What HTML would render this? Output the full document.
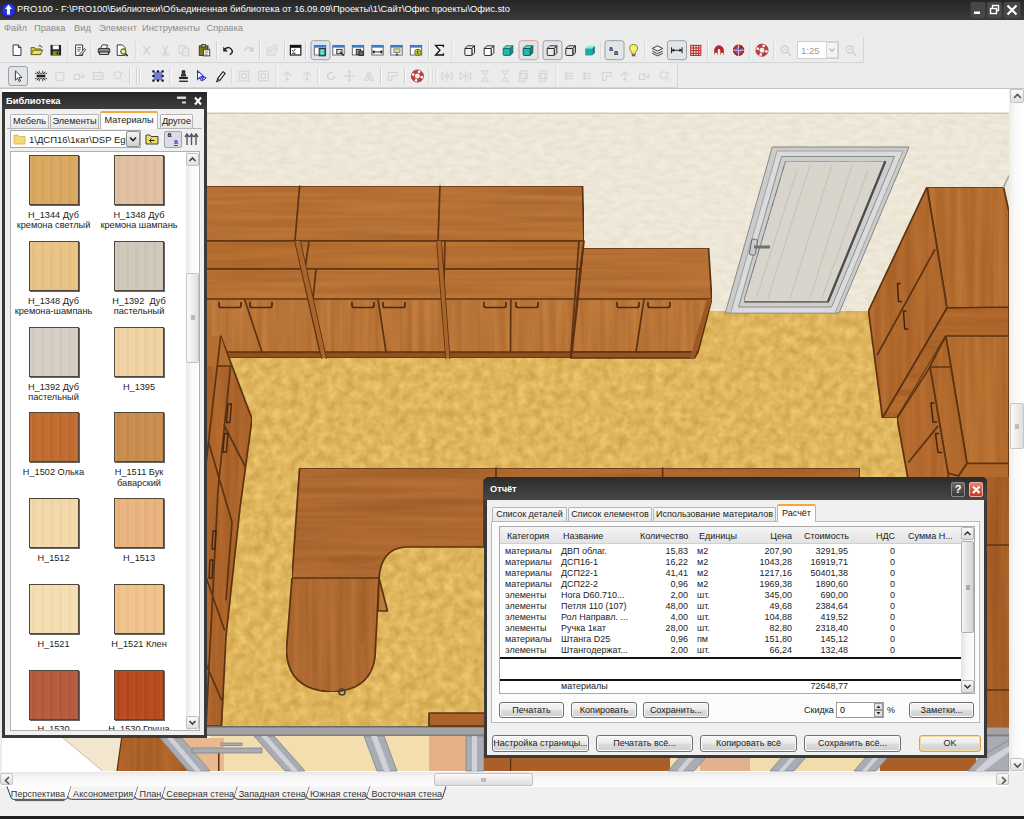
<!DOCTYPE html>
<html><head><meta charset="utf-8">
<style>
*{box-sizing:border-box;margin:0;padding:0}
html,body{width:1024px;height:819px;overflow:hidden;background:#fff}
body{position:relative;font-family:"Liberation Sans",sans-serif;font-size:11px;color:#000}
.abs{position:absolute}
#title{left:0;top:0;width:1024px;height:20px;background:linear-gradient(#262626,#3a3a3a);color:#fff;}
#title .t{position:absolute;left:17px;top:4px;font-size:9.3px;line-height:11px;white-space:nowrap}
#menu{left:0;top:20px;width:1024px;height:17px;background:#ebebeb;color:#8c8c8c;font-size:9.3px;line-height:11px}
#menu span{position:absolute;top:3px}
#tb{left:0;top:37px;width:1024px;height:52px;background:#ececec;border-bottom:1px solid #cbcbcb}
#scene{left:0;top:0}
/* library */
#lib{left:2px;top:92px;width:205px;height:646px;background:#3a3a3a;}
#lib .cap{position:absolute;left:0;top:0;width:205px;height:18px;background:linear-gradient(#262626,#3f3f3f);color:#fff;font-weight:bold;font-size:9.3px}
#lib .body{position:absolute;left:3px;top:17px;width:199px;height:626px;background:#f0f0f0}
.tab{position:absolute;height:14px;border:1px solid #b5b5b5;border-bottom:none;background:linear-gradient(#fafafa,#e6e6e6);font-size:10.5px;text-align:center;line-height:13px;color:#222;border-radius:2px 2px 0 0;white-space:nowrap}
.tab.on{background:#fcfcfc;border-top:2px solid #f0a93a;height:18px;line-height:14px}
.lbl{position:absolute;width:100px;text-align:center;font-size:9.2px;line-height:10.6px;color:#222;white-space:nowrap}
.th{position:absolute;width:50px;height:50px;border:1px solid #51473b;box-shadow:1px 1px 0 #666}
/* dialog */
#dlg{left:484px;top:477px;width:503px;height:281px;background:#3a3a3a;border-radius:5px 5px 0 0}
#dlg .cap{position:absolute;left:0;top:0;width:503px;height:23px;border-radius:5px 5px 0 0;background:linear-gradient(#2b2b2b,#474747);color:#fff;font-weight:bold;font-size:10.5px}
#dlg .body{position:absolute;left:3px;top:23px;width:497px;height:255px;background:#f0f0f0}
.btn{position:absolute;height:16px;border:1px solid #707070;border-radius:3px;background:linear-gradient(#f6f6f6 0%,#ececec 48%,#dcdcdc 52%,#d0d0d0 100%);font-size:10.5px;text-align:center;line-height:14px;color:#222;white-space:nowrap;box-shadow:inset 0 0 0 1px #fbfbfb}
.row{position:absolute;left:0;height:11px;font-size:10.5px;line-height:11px;color:#222;white-space:nowrap}
.row span{position:absolute;top:0}
.r{text-align:right}
</style></head><body>
<svg id="scene" class="abs" width="1024" height="819" viewBox="0 0 1024 819">
<defs>
<filter id="fw" color-interpolation-filters="sRGB" x="0" y="0" width="100%" height="100%"><feTurbulence type="fractalNoise" baseFrequency="0.006 0.16" numOctaves="2" seed="4" result="n"/><feColorMatrix in="n" type="matrix" values="0 0 0 0 0.38  0 0 0 0 0.18  0 0 0 0 0.04  0.42 0 0 0 -0.12" result="a"/><feComposite in="a" in2="SourceGraphic" operator="in" result="b"/><feMerge><feMergeNode in="SourceGraphic"/><feMergeNode in="b"/></feMerge></filter>
<filter id="fwv" color-interpolation-filters="sRGB" x="0" y="0" width="100%" height="100%"><feTurbulence type="fractalNoise" baseFrequency="0.16 0.006" numOctaves="2" seed="7" result="n"/><feColorMatrix in="n" type="matrix" values="0 0 0 0 0.38  0 0 0 0 0.18  0 0 0 0 0.04  0.42 0 0 0 -0.12" result="a"/><feComposite in="a" in2="SourceGraphic" operator="in" result="b"/><feMerge><feMergeNode in="SourceGraphic"/><feMergeNode in="b"/></feMerge></filter>
<filter id="ff" color-interpolation-filters="sRGB" x="0" y="0" width="100%" height="100%"><feTurbulence type="fractalNoise" baseFrequency="0.11" numOctaves="3" seed="2" result="n"/><feColorMatrix in="n" type="matrix" values="0 0 0 0 0.78  0 0 0 0 0.59  0 0 0 0 0.24  1.15 0 0 0 -0.2" result="a"/><feComposite in="a" in2="SourceGraphic" operator="in" result="b"/><feMerge><feMergeNode in="SourceGraphic"/><feMergeNode in="b"/></feMerge></filter>
<filter id="fp" color-interpolation-filters="sRGB" x="0" y="0" width="100%" height="100%"><feTurbulence type="fractalNoise" baseFrequency="0.09 0.2" numOctaves="2" seed="5" result="n"/><feColorMatrix in="n" type="matrix" values="0 0 0 0 0.87  0 0 0 0 0.83  0 0 0 0 0.73  0.9 0 0 0 -0.28" result="a"/><feComposite in="a" in2="SourceGraphic" operator="in" result="b"/><feMerge><feMergeNode in="SourceGraphic"/><feMergeNode in="b"/></feMerge></filter>
</defs>
<rect x="0" y="89" width="1009" height="24" fill="#fff"/>
<!-- wallpaper -->
<rect x="0" y="113" width="1009" height="199" fill="#f1ebdd" filter="url(#fp)"/>
<rect x="0" y="112.500" width="1009" height="1.500" fill="#cdcab4"/>
<!-- floor -->
<rect x="0" y="311" width="1009" height="416" fill="#edc871" filter="url(#ff)"/>
<!-- under area -->
<rect x="0" y="736" width="1009" height="35" fill="#f3deb0"/>
<g id="under"></g>
<!-- gray bar -->
<rect x="200" y="726" width="809" height="10" fill="#a3a3a3"/>
<rect x="200" y="726" width="809" height="1.5" fill="#6b6b6b"/>
<rect x="200" y="734.5" width="809" height="1.5" fill="#7d7d7d"/>
<g stroke="#5c3413" stroke-width="1.700" stroke-linejoin="round" stroke-linecap="round">
<!-- back tall cabinets -->
<g filter="url(#fw)">
<polygon points="200,186 582.5,186 584,241 200,241" fill="#bd7638"/>
<polygon points="200,241 584,241 580,269 200,269" fill="#be7534"/>
<polygon points="200,269 580,269 577,299 200,299" fill="#c07838"/>
<polygon points="200,352 572,352 571,358 200,358" fill="#97531f"/>
</g>
<polygon points="200,299 577,299 572,352 200,352" fill="#c27c3c" filter="url(#fwv)"/>
<!-- low cabinet -->
<polygon points="583,248 708.5,248 711.8,299 578,299" fill="#bd7638" filter="url(#fw)"/>
<polygon points="578,299 711.8,299 698,352 572,352" fill="#c27c3c" filter="url(#fwv)"/>
<polygon points="572,352 698,352 694.5,358 571,358" fill="#97531f"/>
<polygon points="707,299 711.8,299 694.5,358 690,358" fill="#9c5a22" stroke="none"/>
<!-- dividers -->
<g fill="none">
<path d="M299.6,186 L295,241"/><path d="M440,186 L438,241"/>
<path d="M295,241 L320,352 L322,358 M300,241 L326,358 M309,241 L305,269 M316,269 L313,299" />
<path d="M437,241 L446,358 M441,241 L449.5,358 M445,241 L443.5,299"/>
<path d="M579,241 L570.5,358 M584,241 L577.5,299"/>
<path d="M244.5,299 L262,352 M378,299 L386,352 M510.8,299 L510.5,352 M644,299 L636,352"/>
</g>
<polygon points="295,241 300,241 326,358 322,358" fill="#ab652a" stroke="none"/>
<polygon points="437,241 441,241 449.5,358 446,358" fill="#ab652a" stroke="none"/>
<!-- handles -->
<g fill="none" stroke="#4a2a18" stroke-width="1.700">
<path d="M219,302.500 v3 q0,2 2,2 h18 q2,0 2,-2 v-3"/><path d="M250,302.500 v3 q0,2 2,2 h18 q2,0 2,-2 v-3"/>
<path d="M352,302.500 v3 q0,2 2,2 h18 q2,0 2,-2 v-3"/><path d="M383,302.500 v3 q0,2 2,2 h18 q2,0 2,-2 v-3"/>
<path d="M484,302.500 v3 q0,2 2,2 h18 q2,0 2,-2 v-3"/><path d="M516,302.500 v3 q0,2 2,2 h18 q2,0 2,-2 v-3"/>
<path d="M617,302.500 v3 q0,2 2,2 h18 q2,0 2,-2 v-3"/><path d="M648,302.500 v3 q0,2 2,2 h18 q2,0 2,-2 v-3"/>
</g>
<!-- door -->
<g stroke="#858585" stroke-width="1">
<polygon points="772.7,147 909,147 839,313 725.7,313" fill="#cbcbcb"/>
<polygon points="777.500,151 903,151 835,313 731,313" fill="#dbdbdb" stroke="#a2a2a2"/>
<polygon points="782,156.500 894.500,156.500 831.500,307 739,307" fill="#cecece" stroke="#8c8c8c"/>
<polygon points="786,161 886,161 828.7,301.6 744,301.6" fill="#d8d5d0" stroke="#6a6a6a" filter="url(#fp)"/>
<path d="M885,162 L828,301.500" stroke="#4c4c4c" stroke-width="2.200" fill="none"/>
<path d="M745,302 H828" stroke="#6a6a6a" stroke-width="1.600" fill="none"/>
<g stroke="#c4c0ba" stroke-width="1.200" opacity="0.8"><path d="M810,165 L768,298 M832,165 L790,298 M852,165 L810,298 M868,170 L822,298 M797,170 L757,296"/></g>
<rect x="750.500" y="239" width="6" height="16" rx="2" fill="#c9c9c9" stroke="#6a6a6a" transform="rotate(10 753 247)"/>
<rect x="754" y="245.500" width="16" height="3" fill="#707070" stroke="none"/>
</g>
<!-- right cabinet 1 -->
<polygon points="927,187 1003.5,187 1009,212 1009,307 947,308" fill="#bd7434" filter="url(#fwv)"/>
<polygon points="927,187 947,308 882.5,418 868.5,311" fill="#b86e30" filter="url(#fwv)"/>
<polygon points="947,308 1009,307 1009,336 945.8,336 897,418 882.5,418" fill="#b56c2e" filter="url(#fw)"/>
<path d="M934.6,250 L877.4,354.500" fill="none"/>
<g fill="none" stroke="#3e2414" stroke-width="1.500"><path d="M900,283.500 h-2.500 l1,18 h3"/><path d="M906,311 h-2.500 l1.200,18 h3"/></g>
<path d="M1003.500,187 L1009,176" stroke="#aaa" fill="none"/>
<!-- right cabinet 2 -->
<polygon points="897,418 945.8,336 1009,336 1009,490 910,490" fill="#b56c2e" stroke="none"/>
<polygon points="945.8,336 1009,336 1009,463.500 967,463.500" fill="#bd7434" filter="url(#fwv)"/>
<polygon points="945.8,336 967,463.500 958.600,476 948,473 929.600,367" fill="#b56c2e" filter="url(#fwv)"/>
<polygon points="897,418 930,367 948,473 950,490 910,490" fill="#b86e30" filter="url(#fwv)"/>
<polygon points="967,463.500 1009,463.500 1009,490 955,490 958.600,476" fill="#b36a2d"/>
<path d="M929.600,367 H950 M908.700,462 L937.700,426.400" fill="none"/>
<g fill="none" stroke="#3e2414" stroke-width="1.500"><path d="M934,403 h-3 l2,19 h3.500"/><path d="M938.500,433.500 h-3 l2.500,19 h3.500"/></g>
<!-- right of dialog -->
<rect x="985" y="477" width="24" height="250" fill="#ad6229" stroke="none" filter="url(#fwv)"/>
<path d="M987,545 H1009 M987,690 H1009" fill="none"/>
<!-- desk -->
<path d="M299.6,468 H860 V480 H484 V547 H405 Q381,549 379,578 L292,578 Z" fill="#b56e34" filter="url(#fw)"/>
<path d="M292,578 L379,578 L375,657 Q371,690 332,692 Q288,690 286.4,651 Z" fill="#b67035" filter="url(#fwv)"/>
<polygon points="379,578 387.5,611 378,611" fill="#c07838"/>
<ellipse cx="352" cy="560" rx="25" ry="4.500" fill="#9a5a26" opacity="0.35" stroke="none"/><ellipse cx="362" cy="618" rx="4" ry="26" fill="#9a5a26" opacity="0.3" stroke="none"/>
<path d="M496,468 V480 M662.6,468 V477" fill="none"/>
<circle cx="342" cy="692" r="3" fill="none" stroke="#444"/>
<!-- left cabinet -->
<polygon points="200,336 220.7,336 252,419 240,508 226,636 221.500,726 200,726" fill="#b46a2e" filter="url(#fwv)"/>
<polygon points="200,336 220.7,336 230.5,366 200,366" fill="#b56e30" stroke="none"/>
<path d="M220.7,336 L208.5,442 L200,520 M218,366 H230.5 M230.5,366 L218,490 L206,726 M224,425 L245,466 M208.5,442 L232,522 L226,600 M200,560 L224.500,630 M200,650 L221.500,700" fill="none"/>
<g fill="none" stroke="#3e2414" stroke-width="1.3"><path d="M228,404 h3.500 l-1.500,18.500 h-3.500 z"/><path d="M224.500,433.500 h3.500 l-1.500,18.500 h-3.500 z"/><path d="M213,531 h3 l-1,18 h-3 z"/><path d="M210,560 h3 l-1,18 h-3 z"/></g>
<!-- dresser bottom right -->
<rect x="429" y="713" width="56" height="13" fill="#ad6229"/>
</g>
<!-- under-bar details -->
<g>
<rect x="0" y="736" width="210" height="35" fill="#fff"/>
<polygon points="63,738 121.600,738 117,771 102.500,771" fill="#f2e6cf"/>
<path d="M63,738 L102.500,771" stroke="#c9bfa8" stroke-width="1"/>
<polygon points="121.600,738 160,738 190,771 117,771" fill="#b4682c" filter="url(#fwv)"/>
<path d="M121.600,738 L117,771" stroke="#55300f" stroke-width="1.200"/>
<polygon points="182,738 224,738 224,771 210,771" fill="#e8b88e"/>
<g fill="#a9acb3" stroke="#80838a" stroke-width="0.800">
<polygon points="160,738 182,738 210,771 188,771"/><polygon points="167,738 173,738 201,771 195,771" fill="#cfd2d8" stroke="none"/>
</g>
<rect x="218" y="752" width="1.500" height="19" fill="#55300f"/>
<rect x="429" y="736" width="41" height="35" fill="#e6b088"/>
<g fill="#a9acb3" stroke="#80838a" stroke-width="0.800">
<polygon points="254,736 274,736 305,771 285,771"/><polygon points="261,736 267,736 298,771 292,771" fill="#cfd2d8" stroke="none"/>
<polygon points="364,736 384,736 397,771 377,771"/><polygon points="371,736 377,736 390,771 384,771" fill="#cfd2d8" stroke="none"/>
<rect x="466" y="736" width="18" height="35"/><rect x="472" y="736" width="5" height="35" fill="#cfd2d8" stroke="none"/>
<rect x="192" y="748" width="70" height="5"/><rect x="221" y="743" width="21" height="2.500"/>
<polygon points="987,736 1009,736 1009,745 987,760"/>
</g>
<rect x="484" y="757" width="186" height="14" fill="#a95f27"/><rect x="510" y="757" width="1.200" height="14" fill="#55300f"/>
<rect x="700" y="757" width="50" height="14" fill="#e2b290"/>
<rect x="750" y="757" width="130" height="14" fill="#f1dcab"/>
<rect x="880" y="757" width="96" height="14" fill="#a95f27"/>
<g fill="#a9acb3" stroke="#80838a" stroke-width="0.800">
<polygon points="680,757 706,757 694,771 668,771"/><polygon points="689,757 695,757 683,771 677,771" fill="#cfd2d8" stroke="none"/>
<polygon points="782,757 806,757 794,771 770,771"/><polygon points="791,757 796,757 784,771 779,771" fill="#cfd2d8" stroke="none"/>
<polygon points="866,757 888,757 876,771 854,771"/><polygon points="874,757 879,757 867,771 862,771" fill="#cfd2d8" stroke="none"/>
<polygon points="980,757 1009,740 1009,771 968,771"/><polygon points="990,757 1009,746 1009,752 984,771 975,771" fill="#cfd2d8" stroke="none"/>
</g>
</g>
</svg>

<div id="title" class="abs"><svg style="position:absolute;left:1px;top:2px" width="15" height="16" viewBox="0 0 15 16"><circle cx="7.500" cy="8" r="6.800" fill="#2a34d8" stroke="#1a1a90"/><path d="M7.500,2.500 L11,7 H9 V12.500 H6 V7 H4 Z" fill="#fff"/></svg><svg style="position:absolute;left:968px;top:1px" width="56" height="18" viewBox="0 0 56 18"><rect x="2.500" y="1" width="15" height="16" rx="2" fill="#474747"/><rect x="19" y="1" width="15" height="16" rx="2" fill="#474747"/><rect x="35.500" y="1" width="17" height="16" rx="2" fill="#474747"/><rect x="6" y="10.500" width="6" height="2.500" fill="#fff"/><rect x="24.500" y="4.500" width="6" height="5" fill="none" stroke="#fff" stroke-width="1.400"/><rect x="22.500" y="7.500" width="6" height="5" fill="#474747" stroke="#fff" stroke-width="1.400"/><path d="M39.500,4.500 L48.500,13.500 M48.500,4.500 L39.500,13.500" stroke="#fff" stroke-width="2.200"/></svg><span class="t">PRO100 - F:\PRO100\Библиотеки\Объединенная библиотека от 16.09.09\Проекты\1\Сайт\Офис проекты\Офис.sto</span></div>
<div id="menu" class="abs"><span style="left:4px">Файл</span><span style="left:34px">Правка</span><span style="left:74px">Вид</span><span style="left:99px">Элемент</span><span style="left:142px">Инструменты</span><span style="left:206.500px">Справка</span></div>
<div id="tb" class="abs"></div>
<svg class="abs" style="left:0;top:37px" width="1024" height="52" viewBox="0 37 1024 52"><path d="M0,62.500 H863.500 V37.500" fill="none" stroke="#d4d4d4"/><path d="M0,87.500 H677.500 V63" fill="none" stroke="#d4d4d4"/><path d="M0,88.500 H1024" stroke="#c4c4c4"/><g transform="translate(10.0,43.2) scale(0.875)"><path d="M3.5,2 h6 l3,3 v9 h-9 z" fill="#fff" stroke="#222"/><path d="M9.5,2 v3 h3" fill="none" stroke="#222"/></g><g transform="translate(29.8,43.2) scale(0.875)"><path d="M1.5,5 h4 l1,1.5 h6 v6.5 h-11 z" fill="#d8c840" stroke="#5a5a10"/><path d="M1.5,13 l2.5,-5 h11 l-3,5 z" fill="#efe060" stroke="#5a5a10"/><path d="M10,3 q3,-1 4,2" stroke="#222" fill="none"/></g><g transform="translate(48.8,43.2) scale(0.875)"><rect x="2" y="2" width="12" height="12" fill="#222"/><rect x="4.5" y="2.5" width="7" height="4.5" fill="#fff"/><rect x="4.5" y="9" width="7" height="5" fill="#8a8a1a"/><rect x="9" y="10" width="1.5" height="3" fill="#222"/></g><path d="M68,41.2 V59.2" stroke="#d0d0d0" stroke-width="1"/><path d="M69,41.2 V59.2" stroke="#fafafa" stroke-width="1"/><g transform="translate(73.0,43.2) scale(0.875)"><path d="M3,2 h8 v12 h-8 z" fill="#fff" stroke="#222"/><path d="M5,5 h4 M5,7 h4 M5,9 h3" stroke="#555"/><path d="M8,12 l5,-6 l1.5,1.5 l-5,6 l-2,0.5 z" fill="#ddd" stroke="#222" stroke-width="0.8"/></g><path d="M91,41.2 V59.2" stroke="#d0d0d0" stroke-width="1"/><path d="M92,41.2 V59.2" stroke="#fafafa" stroke-width="1"/><g transform="translate(97.0,43.2) scale(0.875)"><path d="M4,6 l2,-4 h6 l-1,4" fill="#fff" stroke="#222"/><path d="M1.5,7 q0,-1 1,-1 h11 q1,0 1,1 v4 h-13 z" fill="#888" stroke="#222"/><rect x="3" y="10" width="10" height="3" fill="#ccc" stroke="#222"/></g><g transform="translate(115.0,43.2) scale(0.875)"><path d="M2.5,2 h6 l3,3 v9 h-9 z" fill="#fff" stroke="#222"/><circle cx="9.5" cy="9.5" r="3" fill="#e8e8a0" stroke="#6a6a10" stroke-width="1.2"/><path d="M11.7,11.7 L14.5,14.5" stroke="#222" stroke-width="1.6"/></g><path d="M136,41.2 V59.2" stroke="#d0d0d0" stroke-width="1"/><path d="M137,41.2 V59.2" stroke="#fafafa" stroke-width="1"/><g transform="translate(139.7,43.2) scale(0.875)"><path d="M4,3 L12,13 M12,3 L4,13" stroke="#cecece" stroke-width="1.3"/></g><g transform="translate(158.7,43.2) scale(0.875)"><path d="M5,3 L9,12 M10,3 L6,12" stroke="#cecece" stroke-width="1.2"/><circle cx="5.5" cy="13" r="1.5" fill="none" stroke="#cecece"/><circle cx="10" cy="13" r="1.5" fill="none" stroke="#cecece"/></g><g transform="translate(177.0,43.2) scale(0.875)"><rect x="2.5" y="2.5" width="7" height="9" fill="none" stroke="#cecece"/><rect x="6.5" y="5.5" width="7" height="9" fill="#e8e8e8" stroke="#cecece"/></g><g transform="translate(197.5,43.2) scale(0.875)"><rect x="2" y="3" width="10" height="11" fill="#7a7a18" stroke="#333"/><rect x="5" y="1.5" width="4" height="3" fill="#bbb" stroke="#333"/><rect x="7" y="7" width="7" height="7.5" fill="#fff" stroke="#333"/><path d="M8.5,9 h4 M8.5,11 h4 M8.5,13 h3" stroke="#666" stroke-width="0.8"/></g><path d="M216.6,41.2 V59.2" stroke="#d0d0d0" stroke-width="1"/><path d="M217.6,41.2 V59.2" stroke="#fafafa" stroke-width="1"/><g transform="translate(221.0,43.2) scale(0.875)"><path d="M4,7 q6,-5 9,2 q0,3 -3,4" fill="none" stroke="#222" stroke-width="1.6"/><path d="M2.5,4 v5.5 h5.5 z" fill="#222"/></g><g transform="translate(241.7,43.2) scale(0.875)"><path d="M12,7 q-6,-5 -9,2" fill="none" stroke="#cecece" stroke-width="1.5"/><path d="M13.5,4 v5.5 h-5.5 z" fill="#cecece"/></g><path d="M259.5,41.2 V59.2" stroke="#d0d0d0" stroke-width="1"/><path d="M260.5,41.2 V59.2" stroke="#fafafa" stroke-width="1"/><g transform="translate(265.0,43.2) scale(0.875)"><rect x="2.5" y="5.5" width="9" height="8" fill="none" stroke="#cecece"/><path d="M9,2.5 h5 v7" fill="none" stroke="#cecece"/><path d="M4,8 h5 M4,10 h5" stroke="#cecece"/></g><path d="M284.6,41.2 V59.2" stroke="#d0d0d0" stroke-width="1"/><path d="M285.6,41.2 V59.2" stroke="#fafafa" stroke-width="1"/><g transform="translate(288.6,43.2) scale(0.875)"><rect x="2" y="2.5" width="12" height="11" fill="#fff" stroke="#111" stroke-width="1.3"/><rect x="2" y="2.5" width="12" height="2.8" fill="#111"/><path d="M4,8 l1.5,1.5 l2.5,-3" stroke="#111" fill="none"/><path d="M4,11.5 h4" stroke="#111"/></g><path d="M305.5,41.2 V59.2" stroke="#d0d0d0" stroke-width="1"/><path d="M306.5,41.2 V59.2" stroke="#fafafa" stroke-width="1"/><rect x="311" y="40.7" width="19" height="19" rx="2.5" fill="#e2e5e8" stroke="#9aa0a8" stroke-width="1"/><g transform="translate(313.0,43.2) scale(0.875)"><rect x="1.5" y="2.5" width="13" height="11" fill="#fff" stroke="#556"/><rect x="1.5" y="2.5" width="13" height="2.6" fill="#3a7ad0"/><rect x="7" y="6" width="7" height="8.5" fill="#1aa7a0" stroke="#222"/><path d="M8.5,8 h4 M8.5,10 h4 M8.5,12 h4" stroke="#fff" stroke-width="0.9"/></g><g transform="translate(331.5,43.2) scale(0.875)"><rect x="1.5" y="2.5" width="13" height="11" fill="#fff" stroke="#556"/><rect x="1.5" y="2.5" width="13" height="2.6" fill="#3a7ad0"/><rect x="6" y="7" width="6" height="5" fill="#ddd" stroke="#222"/><path d="M10,10 l4,4" stroke="#222" stroke-width="1.4"/></g><g transform="translate(351.0,43.2) scale(0.875)"><rect x="1.5" y="2.5" width="13" height="11" fill="#fff" stroke="#556"/><rect x="1.5" y="2.5" width="13" height="2.6" fill="#3a7ad0"/><rect x="6" y="7" width="5" height="6" fill="#999" stroke="#222"/><rect x="9" y="9" width="5" height="5" fill="#666" stroke="#222"/></g><g transform="translate(370.5,43.2) scale(0.875)"><rect x="1.5" y="2.5" width="13" height="11" fill="#fff" stroke="#556"/><rect x="1.5" y="2.5" width="13" height="2.6" fill="#3a7ad0"/><path d="M3,10 h10 M3,8 v4 M13,8 v4 M5,9 l-2,1 l2,1 M11,9 l2,1 l-2,1" stroke="#111" fill="none"/></g><g transform="translate(389.5,43.2) scale(0.875)"><rect x="1.5" y="2.5" width="13" height="11" fill="#fff" stroke="#556"/><rect x="1.5" y="2.5" width="13" height="2.6" fill="#3a7ad0"/><rect x="5" y="6.5" width="7" height="4" fill="#e8e070" stroke="#777"/><path d="M8.5,11 v3 M7,12.5 l1.5,1.5 l1.5,-1.5" stroke="#333" fill="none"/></g><g transform="translate(409.0,43.2) scale(0.875)"><rect x="1.5" y="2.5" width="13" height="11" fill="#fff" stroke="#556"/><rect x="1.5" y="2.5" width="13" height="2.6" fill="#3a7ad0"/><circle cx="10" cy="10.5" r="3.6" fill="#c8d020" stroke="#555"/><path d="M10,8.5 v4 M9,9.5 h1" stroke="#222"/></g><path d="M428.5,41.2 V59.2" stroke="#d0d0d0" stroke-width="1"/><path d="M429.5,41.2 V59.2" stroke="#fafafa" stroke-width="1"/><g transform="translate(432.5,43.2) scale(0.875)"><path d="M12.5,4.5 v-2 h-9 l5,5.5 l-5,5.5 h9 v-2" fill="none" stroke="#111" stroke-width="1.5"/></g><path d="M452,41.2 V59.2" stroke="#d0d0d0" stroke-width="1"/><path d="M453,41.2 V59.2" stroke="#fafafa" stroke-width="1"/><g transform="translate(462.7,43.2) scale(0.875)"><path d="M2.5,6 l3,-3 h8 l-3,3 z" fill="#f4f4f4" stroke="#111"/><path d="M10.5,6 l3,-3 v8 l-3,3 z" fill="#f4f4f4" stroke="#111"/><rect x="2.5" y="6" width="8" height="8" fill="#f4f4f4" stroke="#111" rx="1"/></g><g transform="translate(482.0,43.2) scale(0.875)"><path d="M2.5,6 l3,-3 h8 l-3,3 z" fill="#fff" stroke="#111"/><path d="M10.5,6 l3,-3 v8 l-3,3 z" fill="#fff" stroke="#111"/><rect x="2.5" y="6" width="8" height="8" fill="#fff" stroke="#111" rx="1"/></g><g transform="translate(501.0,43.2) scale(0.875)"><path d="M2.5,6 l3,-3 h8 l-3,3 z" fill="#7fe0da" stroke="#0a6a66"/><path d="M10.5,6 l3,-3 v8 l-3,3 z" fill="#0f8f88" stroke="#0a6a66"/><rect x="2.5" y="6" width="8" height="8" fill="#20b8b0" stroke="#0a6a66" rx="1"/></g><rect x="519" y="40.7" width="19" height="19" rx="2.5" fill="#e2e5e8" stroke="#d9a0a0" stroke-width="1"/><g transform="translate(521.0,43.2) scale(0.875)"><path d="M2.5,6 l3,-3 h8 l-3,3 z" fill="#7fe0da" stroke="#0a5050"/><path d="M10.5,6 l3,-3 v8 l-3,3 z" fill="#0f8f88" stroke="#0a5050"/><rect x="2.5" y="6" width="8" height="8" fill="#20b8b0" stroke="#0a5050" rx="1"/></g><rect x="543" y="40.7" width="19" height="19" rx="2.5" fill="#e2e5e8" stroke="#9aa0a8" stroke-width="1"/><g transform="translate(545.0,43.2) scale(0.875)"><path d="M2.5,6 l3,-3 h8 l-3,3 z" fill="#f8f8f8" stroke="#111"/><path d="M10.5,6 l3,-3 v8 l-3,3 z" fill="#ddd" stroke="#111"/><rect x="2.5" y="6" width="8" height="8" fill="#ececec" stroke="#111" rx="1"/></g><g transform="translate(563.6,43.2) scale(0.875)"><path d="M2.5,6 l3,-3 h8 l-3,3 z" fill="#f4f4f4" stroke="#111"/><path d="M10.5,6 l3,-3 v8 l-3,3 z" fill="#ccc" stroke="#111"/><rect x="2.5" y="6" width="8" height="8" fill="#e8e8e8" stroke="#111" rx="1"/></g><g transform="translate(583.0,43.2) scale(0.875)"><path d="M2.5,6 l3,-3 h8 l-3,3 z" fill="#8fe8e2"/><path d="M10.5,6 l3,-3 v8 l-3,3 z" fill="#0c7f79"/><rect x="2.5" y="6" width="8" height="8" fill="#19aaa3"/></g><path d="M601,41.2 V59.2" stroke="#d0d0d0" stroke-width="1"/><path d="M602,41.2 V59.2" stroke="#fafafa" stroke-width="1"/><rect x="605" y="40.7" width="19" height="19" rx="2.5" fill="#e2e5e8" stroke="#9aa0a8" stroke-width="1"/><g transform="translate(607.5,43.2) scale(0.875)"><text x="2" y="9" font-size="7.5" font-weight="bold" fill="#223" font-family="Liberation Sans, sans-serif">a</text><text x="7.5" y="13" font-size="8.5" font-weight="bold" fill="#223" font-family="Liberation Sans, sans-serif">a</text></g><g transform="translate(626.6,43.2) scale(0.875)"><path d="M8,1.5 q5,0 4.5,5 q-0.5,2 -2.5,4 v2 h-4 v-2 q-2,-2 -2.5,-4 q-0.5,-5 4.500,-5 z" fill="#f4f070" stroke="#7a7a10"/><rect x="6" y="12.5" width="4" height="2.5" fill="#666"/></g><path d="M645,41.2 V59.2" stroke="#d0d0d0" stroke-width="1"/><path d="M646,41.2 V59.2" stroke="#fafafa" stroke-width="1"/><g transform="translate(650.5,43.2) scale(0.875)"><path d="M2,6 l6,-3 l6,3 l-6,3 z" fill="#eee" stroke="#222"/><path d="M2,9 l6,3 l6,-3 M2,11.5 l6,3 l6,-3" fill="none" stroke="#222"/></g><rect x="667.5" y="40.7" width="19.0" height="19" rx="2.5" fill="#e2e5e8" stroke="#9aa0a8" stroke-width="1"/><g transform="translate(669.8,43.2) scale(0.875)"><path d="M2,8 h12 M2,4.500 v7 M14,4.500 v7" stroke="#222" stroke-width="1.2" fill="none"/><path d="M2,8 l3,-2 v4 z M14,8 l-3,-2 v4 z" fill="#222"/></g><g transform="translate(688.6,43.2) scale(0.875)"><path d="M2,2.5 h12 M2,5.500 h12 M2,8.500 h12 M2,11.500 h12 M2,14 h12 M2.5,2 v12 M5.500,2 v12 M8.500,2 v12 M11.500,2 v12 M14,2 v12" stroke="#b82020" stroke-width="1.1"/></g><path d="M707.7,41.2 V59.2" stroke="#d0d0d0" stroke-width="1"/><path d="M708.7,41.2 V59.2" stroke="#fafafa" stroke-width="1"/><g transform="translate(712.0,43.2) scale(0.875)"><path d="M3,13 v-5 a5,5 0 0 1 10,0 v5 h-3 v-5 a2,2 0 0 0 -4,0 v5 z" fill="#d42020" stroke="#801010" stroke-width="0.8"/><rect x="3" y="11" width="3" height="2.5" fill="#eee"/><rect x="10" y="11" width="3" height="2.5" fill="#eee"/></g><g transform="translate(731.6,43.2) scale(0.875)"><circle cx="8" cy="8" r="6" fill="#c03030" stroke="#601010"/><circle cx="8" cy="8" r="3.5" fill="#8050c0"/><path d="M8,1 v14 M1,8 h14" stroke="#fff" stroke-width="0.8"/><path d="M8,8 l4,-5" stroke="#222"/></g><path d="M750,41.2 V59.2" stroke="#d0d0d0" stroke-width="1"/><path d="M751,41.2 V59.2" stroke="#fafafa" stroke-width="1"/><g transform="translate(755.0,43.2) scale(0.875)"><circle cx="8" cy="8" r="5.2" fill="none" stroke="#d23a3a" stroke-width="3.6"/><circle cx="8" cy="8" r="5.2" fill="none" stroke="#fff" stroke-width="3.6" stroke-dasharray="2.6 5.570"/><circle cx="8" cy="8" r="7" fill="none" stroke="#7a2020" stroke-width="0.7"/><circle cx="8" cy="8" r="3.4" fill="none" stroke="#7a2020" stroke-width="0.7"/></g><path d="M774,41.2 V59.2" stroke="#d0d0d0" stroke-width="1"/><path d="M775,41.2 V59.2" stroke="#fafafa" stroke-width="1"/><g transform="translate(778.5,43.2) scale(0.875)"><circle cx="7" cy="7" r="4" fill="none" stroke="#cecece" stroke-width="1.3"/><path d="M10,10 L14,14" stroke="#cecece" stroke-width="1.8"/><path d="M5,7 h4" stroke="#cecece"/></g><g transform="translate(843.6,43.2) scale(0.875)"><circle cx="7" cy="7" r="4" fill="none" stroke="#cecece" stroke-width="1.3"/><path d="M10,10 L14,14" stroke="#cecece" stroke-width="1.8"/><path d="M5,7 h4" stroke="#cecece"/></g><rect x="8.5" y="66.5" width="19.0" height="19" rx="2.5" fill="#e2e5e8" stroke="#9aa0a8" stroke-width="1"/><g transform="translate(11.0,69.0) scale(0.875)"><path d="M5,2 v11 l2.500,-2.500 l2,4 l1.500,-0.800 l-2,-4 h3.500 z" fill="#fff" stroke="#222"/></g><g transform="translate(34.0,69.0) scale(0.875)"><path d="M1,5 h14 M1,11 h14" stroke="#222" stroke-dasharray="2 1"/><path d="M3,3 l2,2 M13,3 l-2,2 M3,13 l2,-2 M13,13 l-2,-2 M6,2 v3 M10,2 v3 M6,11 v3 M10,11 v3" stroke="#222"/><rect x="3" y="6.500" width="10" height="3" fill="#222"/></g><g transform="translate(53.3,69.0) scale(0.875)"><rect x="3" y="4" width="9" height="9" fill="none" stroke="#cecece" rx="1"/></g><g transform="translate(72.3,69.0) scale(0.875)"><rect x="2" y="6" width="6" height="6" fill="none" stroke="#cecece"/><path d="M9,9 h5 M12,5 v6" stroke="#cecece"/></g><g transform="translate(91.6,69.0) scale(0.875)"><rect x="2" y="4" width="11" height="8" fill="none" stroke="#cecece"/><path d="M2,8 h11 M10,2 v4" stroke="#cecece"/></g><g transform="translate(111.4,69.0) scale(0.875)"><circle cx="7" cy="7" r="4" fill="none" stroke="#cecece"/><path d="M10,10 l4,4 M11,3 l3,3" stroke="#cecece"/></g><path d="M129.7,67 V85" stroke="#d0d0d0" stroke-width="1"/><path d="M130.7,67 V85" stroke="#fafafa" stroke-width="1"/><path d="M136.5,67 V85" stroke="#d0d0d0" stroke-width="1"/><path d="M137.5,67 V85" stroke="#fafafa" stroke-width="1"/><path d="M139.5,67 V85" stroke="#d0d0d0" stroke-width="1"/><path d="M140.5,67 V85" stroke="#fafafa" stroke-width="1"/><g transform="translate(151.0,69.0) scale(0.875)"><rect x="3" y="3" width="10" height="10" fill="#4a5ad0" opacity="0.75"/><rect x="1.5" y="1.5" width="2.400" height="2.400" fill="#111"/><rect x="1.5" y="6.8" width="2.400" height="2.400" fill="#111"/><rect x="1.5" y="12.1" width="2.400" height="2.400" fill="#111"/><rect x="6.8" y="1.5" width="2.400" height="2.400" fill="#111"/><rect x="6.8" y="12.1" width="2.400" height="2.400" fill="#111"/><rect x="12.1" y="1.5" width="2.400" height="2.400" fill="#111"/><rect x="12.1" y="6.8" width="2.400" height="2.400" fill="#111"/><rect x="12.1" y="12.1" width="2.400" height="2.400" fill="#111"/></g><path d="M170,67 V85" stroke="#d0d0d0" stroke-width="1"/><path d="M171,67 V85" stroke="#fafafa" stroke-width="1"/><g transform="translate(176.5,69.0) scale(0.875)"><path d="M6.500,2 h3 v3 l1,3 h-5 l1,-3 z" fill="#444" stroke="#111"/><rect x="3" y="9" width="10" height="2.500" fill="#222"/><path d="M3,14 h10" stroke="#111" stroke-width="1.4"/></g><g transform="translate(194.0,69.0) scale(0.875)"><path d="M4,2 v10 l2.500,-2.500 l2,4 l1.500,-0.800 l-2,-4 h3.500 z" fill="#fff" stroke="#3038c0" stroke-width="1.2"/><path d="M9,9 l5,1 l-3,3 z" fill="#aab0ff" stroke="#3038c0"/></g><g transform="translate(213.3,69.0) scale(0.875)"><path d="M5,11 l6,-8 l2.500,2 l-6,8 l-3.500,1.500 z" fill="#fff" stroke="#111" stroke-width="1.2"/><path d="M5,11 l2.500,2" stroke="#111"/></g><path d="M232,67 V85" stroke="#d0d0d0" stroke-width="1"/><path d="M233,67 V85" stroke="#fafafa" stroke-width="1"/><g transform="translate(237.0,69.0) scale(0.875)"><rect x="2.500" y="2.500" width="11" height="11" fill="none" stroke="#cecece"/><rect x="5.500" y="5.500" width="5" height="5" fill="none" stroke="#cecece"/></g><g transform="translate(256.4,69.0) scale(0.875)"><rect x="2.500" y="2.500" width="11" height="11" fill="none" stroke="#cecece"/><rect x="5.500" y="5.500" width="5" height="5" fill="none" stroke="#cecece"/></g><path d="M276,67 V85" stroke="#d0d0d0" stroke-width="1"/><path d="M277,67 V85" stroke="#fafafa" stroke-width="1"/><g transform="translate(280.0,69.0) scale(0.875)"><path d="M8,2 v12 M4,8 a4,4 0 0 1 8,0 M6,12 h4" stroke="#cecece" fill="none"/></g><g transform="translate(300.0,69.0) scale(0.875)"><path d="M8,2 v12 M4,8 a4,4 0 0 1 8,0 M6,12 h4" stroke="#cecece" fill="none"/></g><path d="M318,67 V85" stroke="#d0d0d0" stroke-width="1"/><path d="M319,67 V85" stroke="#fafafa" stroke-width="1"/><g transform="translate(324.0,69.0) scale(0.875)"><path d="M12,8 a4,4 0 1 1 -2,-3.500" stroke="#cecece" fill="none" stroke-width="1.3"/></g><g transform="translate(342.4,69.0) scale(0.875)"><path d="M8,2 v12 M2,8 h12 M6,4 l2,-2 l2,2 M6,12 l2,2 l2,-2" stroke="#cecece" fill="none"/></g><g transform="translate(362.0,69.0) scale(0.875)"><path d="M3,13 l4,-9 v9 z M9,13 v-9 l4,9 z" stroke="#cecece" fill="none"/></g><path d="M380.5,67 V85" stroke="#d0d0d0" stroke-width="1"/><path d="M381.5,67 V85" stroke="#fafafa" stroke-width="1"/><g transform="translate(385.7,69.0) scale(0.875)"><path d="M3,4 h10 v4 h-6 v5 h-4 z" stroke="#cecece" fill="none"/></g><path d="M404.6,67 V85" stroke="#d0d0d0" stroke-width="1"/><path d="M405.6,67 V85" stroke="#fafafa" stroke-width="1"/><g transform="translate(410.4,69.0) scale(0.875)"><circle cx="8" cy="8" r="5.2" fill="none" stroke="#d23a3a" stroke-width="3.6"/><circle cx="8" cy="8" r="5.2" fill="none" stroke="#fff" stroke-width="3.6" stroke-dasharray="2.6 5.570"/><circle cx="8" cy="8" r="7" fill="none" stroke="#7a2020" stroke-width="0.7"/><circle cx="8" cy="8" r="3.4" fill="none" stroke="#7a2020" stroke-width="0.7"/></g><path d="M429,67 V85" stroke="#d0d0d0" stroke-width="1"/><path d="M430,67 V85" stroke="#fafafa" stroke-width="1"/><path d="M433,67 V85" stroke="#d0d0d0" stroke-width="1"/><path d="M434,67 V85" stroke="#fafafa" stroke-width="1"/><path d="M436,67 V85" stroke="#d0d0d0" stroke-width="1"/><path d="M437,67 V85" stroke="#fafafa" stroke-width="1"/><g transform="translate(440.0,69.0) scale(0.875)"><path d="M2,4 l5,4 l-5,4 z M14,4 l-5,4 l5,4 z M8,2 v12" stroke="#cecece" fill="none"/></g><g transform="translate(458.5,69.0) scale(0.875)"><path d="M2,4 l5,4 l-5,4 z M14,4 l-5,4 l5,4 z M8,2 v12" stroke="#cecece" fill="none"/></g><g transform="translate(478.0,69.0) scale(0.875)"><path d="M4,2 l4,5 l4,-5 z M4,14 l4,-5 l4,5 z" stroke="#cecece" fill="none"/></g><g transform="translate(498.0,69.0) scale(0.875)"><path d="M4,2 l4,5 l4,-5 z M4,14 l4,-5 l4,5 z" stroke="#cecece" fill="none"/></g><g transform="translate(516.6,69.0) scale(0.875)"><rect x="5" y="2" width="7" height="9" fill="none" stroke="#cecece"/><rect x="3" y="5" width="7" height="9" fill="none" stroke="#cecece"/></g><g transform="translate(536.4,69.0) scale(0.875)"><rect x="5" y="2" width="7" height="9" fill="none" stroke="#cecece"/><rect x="3" y="5" width="7" height="9" fill="none" stroke="#cecece"/></g><path d="M556,67 V85" stroke="#d0d0d0" stroke-width="1"/><path d="M557,67 V85" stroke="#fafafa" stroke-width="1"/><g transform="translate(562.0,69.0) scale(0.875)"><path d="M3,5 h10 M3,8 h10 M3,11 h10 M5,3 v10" stroke="#cecece" fill="none"/></g><g transform="translate(580.0,69.0) scale(0.875)"><path d="M3,5 h10 M3,8 h10 M3,11 h10 M5,3 v10" stroke="#cecece" fill="none"/></g><g transform="translate(600.0,69.0) scale(0.875)"><path d="M3,4 h10 v4 h-6 v5 h-4 z" stroke="#cecece" fill="none"/></g><g transform="translate(618.0,69.0) scale(0.875)"><path d="M8,2 v12 M4,8 a4,4 0 0 1 8,0 M6,12 h4" stroke="#cecece" fill="none"/></g><g transform="translate(637.8,69.0) scale(0.875)"><rect x="2" y="6" width="6" height="6" fill="none" stroke="#cecece"/><path d="M9,9 h5 M12,5 v6" stroke="#cecece"/></g><g transform="translate(657.5,69.0) scale(0.875)"><circle cx="7" cy="7" r="4" fill="none" stroke="#cecece"/><path d="M10,10 l4,4 M11,3 l3,3" stroke="#cecece"/></g><rect x="797.500" y="41.500" width="41" height="17" fill="#fff" stroke="#d0d0d0"/><text x="801" y="54" font-size="9.500" fill="#999" font-family="Liberation Sans, sans-serif">1:25</text><rect x="826.500" y="42.500" width="11" height="15" fill="#f4f4f4" stroke="#d8d8d8"/><path d="M829.500,48.500 l2.500,2.500 l2.500,-2.500" stroke="#bbb" fill="none" stroke-width="1.3"/></svg>
<div id="lib" class="abs"><div class="cap"><span style="position:absolute;left:4px;top:4px;font-size:9.3px;line-height:11px">Библиотека</span><svg style="position:absolute;left:174px;top:3px" width="28" height="12" viewBox="0 0 28 12"><rect x="1" y="1.500" width="9" height="2.500" fill="#d8d8d8"/><rect x="6" y="6.500" width="4" height="2" fill="#d8d8d8"/><path d="M19,2.500 L25,9.500 M25,2.500 L19,9.500" stroke="#fff" stroke-width="2"/></svg></div><div class="body"></div><div style="position:absolute;left:5px;top:36px;width:195px;height:1px;background:#b5b5b5"></div><div class="tab" style="left:8px;top:22px;width:39px;font-size:9.2px">Мебель</div><div class="tab" style="left:48px;top:22px;width:49px;font-size:9.2px">Элементы</div><div class="tab on" style="left:98px;top:19px;width:58px;font-size:9.2px">Материалы</div><div class="tab" style="left:158px;top:22px;width:33px;font-size:9.2px">Другое</div><div style="position:absolute;left:8px;top:38px;width:131px;height:18px;background:#fff;border:1px solid #a8a8a8"></div><svg style="position:absolute;left:11px;top:41px" width="13" height="12" viewBox="0 0 13 12"><path d="M1,2 h4 l1,1.500 h6 v7.500 h-11 z" fill="#f3d873" stroke="#d4b548" stroke-width="0.800"/></svg><span style="position:absolute;left:27px;top:41.5px;font-size:9.500px;line-height:11px;white-space:nowrap;color:#222">1\ДСП16\1кат\DSP Eg</span><div style="position:absolute;left:124px;top:39px;width:14px;height:16px;border:1px solid #8f8f8f;border-radius:2px;background:linear-gradient(#f4f4f4,#cfcfcf)"><svg width="12" height="14" viewBox="0 0 12 14" style="position:absolute;left:0;top:0"><path d="M3,5.500 L6,8.500 L9,5.500" stroke="#222" stroke-width="1.600" fill="none"/></svg></div><svg style="position:absolute;left:143px;top:40px" width="14" height="13" viewBox="0 0 14 13"><path d="M1,3 h4 l1,1.500 h7 v7.500 h-12 z" fill="#e8e060" stroke="#444" stroke-width="1"/><path d="M4.500,8.500 h5 M4.500,8.500 l2,-2 M4.500,8.500 l2,2" stroke="#222" stroke-width="1" fill="none"/></svg><div style="position:absolute;left:162px;top:39px;width:18px;height:17px;border:1px solid #a4a4b0;background:#dcdce4;border-radius:2px"></div><span style="position:absolute;left:165.5px;top:39px;font-size:7px;font-weight:bold;color:#223">a</span><span style="position:absolute;left:172px;top:45.5px;font-size:7px;font-weight:bold;color:#24c;text-decoration:underline">a</span><svg style="position:absolute;left:182px;top:40px" width="15" height="14" viewBox="0 0 15 14"><path d="M3,3 V13 M7.500,3 V13 M12,3 V13 M1,5 L3,2 L5,5 M5.500,5 L7.500,2 L9.500,5 M10,5 L12,2 L14,5" stroke="#556" stroke-width="1.400" fill="none"/></svg><div style="position:absolute;left:8px;top:59px;width:190px;height:580px;background:#fff;border:1px solid #b0b0b0;overflow:hidden"><div class="th" style="left:17.5px;top:3.1px;background:repeating-linear-gradient(90deg,rgba(255,255,255,0.05) 0 2px,rgba(0,0,0,0.02) 2px 5px,rgba(255,255,255,0.025) 5px 9px),#d8a75e"></div><div class="lbl" style="left:-7.5px;top:57.9px">H_1344 Дуб<br>кремона светлый</div><div class="th" style="left:103.0px;top:3.1px;background:repeating-linear-gradient(90deg,rgba(255,255,255,0.05) 0 2px,rgba(0,0,0,0.02) 2px 5px,rgba(255,255,255,0.025) 5px 9px),#e1c0a2"></div><div class="lbl" style="left:78.0px;top:57.9px">H_1348 Дуб<br>кремона шампань</div><div class="th" style="left:17.5px;top:88.9px;background:repeating-linear-gradient(90deg,rgba(255,255,255,0.05) 0 2px,rgba(0,0,0,0.02) 2px 5px,rgba(255,255,255,0.025) 5px 9px),#e9c283"></div><div class="lbl" style="left:-7.5px;top:143.7px">H_1348 Дуб<br>кремона-шампань</div><div class="th" style="left:103.0px;top:88.9px;background:repeating-linear-gradient(90deg,rgba(255,255,255,0.05) 0 2px,rgba(0,0,0,0.02) 2px 5px,rgba(255,255,255,0.025) 5px 9px),#cfc7ba"></div><div class="lbl" style="left:78.0px;top:143.7px">H_1392&nbsp; Дуб<br>пастельный</div><div class="th" style="left:17.5px;top:174.7px;background:repeating-linear-gradient(90deg,rgba(255,255,255,0.05) 0 2px,rgba(0,0,0,0.02) 2px 5px,rgba(255,255,255,0.025) 5px 9px),#d3cdc3"></div><div class="lbl" style="left:-7.5px;top:229.5px">H_1392 Дуб<br>пастельный</div><div class="th" style="left:103.0px;top:174.7px;background:repeating-linear-gradient(90deg,rgba(255,255,255,0.05) 0 2px,rgba(0,0,0,0.02) 2px 5px,rgba(255,255,255,0.025) 5px 9px),#f0d2a2"></div><div class="lbl" style="left:78.0px;top:229.5px">H_1395</div><div class="th" style="left:17.5px;top:260.4px;background:repeating-linear-gradient(90deg,rgba(255,255,255,0.05) 0 2px,rgba(0,0,0,0.02) 2px 5px,rgba(255,255,255,0.025) 5px 9px),#c0692c"></div><div class="lbl" style="left:-7.5px;top:315.2px">H_1502 Олька</div><div class="th" style="left:103.0px;top:260.4px;background:repeating-linear-gradient(90deg,rgba(255,255,255,0.05) 0 2px,rgba(0,0,0,0.02) 2px 5px,rgba(255,255,255,0.025) 5px 9px),#c98b4c"></div><div class="lbl" style="left:78.0px;top:315.2px">H_1511 Бук<br>баварский</div><div class="th" style="left:17.5px;top:346.2px;background:repeating-linear-gradient(90deg,rgba(255,255,255,0.05) 0 2px,rgba(0,0,0,0.02) 2px 5px,rgba(255,255,255,0.025) 5px 9px),#f3d8a8"></div><div class="lbl" style="left:-7.5px;top:401.0px">H_1512</div><div class="th" style="left:103.0px;top:346.2px;background:repeating-linear-gradient(90deg,rgba(255,255,255,0.05) 0 2px,rgba(0,0,0,0.02) 2px 5px,rgba(255,255,255,0.025) 5px 9px),#e9b27c"></div><div class="lbl" style="left:78.0px;top:401.0px">H_1513</div><div class="th" style="left:17.5px;top:431.9px;background:repeating-linear-gradient(90deg,rgba(255,255,255,0.05) 0 2px,rgba(0,0,0,0.02) 2px 5px,rgba(255,255,255,0.025) 5px 9px),#f4ddb0"></div><div class="lbl" style="left:-7.5px;top:486.7px">H_1521</div><div class="th" style="left:103.0px;top:431.9px;background:repeating-linear-gradient(90deg,rgba(255,255,255,0.05) 0 2px,rgba(0,0,0,0.02) 2px 5px,rgba(255,255,255,0.025) 5px 9px),#f1c28a"></div><div class="lbl" style="left:78.0px;top:486.7px">H_1521 Клен</div><div class="th" style="left:17.5px;top:517.6px;background:repeating-linear-gradient(90deg,rgba(255,255,255,0.05) 0 2px,rgba(0,0,0,0.02) 2px 5px,rgba(255,255,255,0.025) 5px 9px),#b4583c"></div><div class="lbl" style="left:-7.5px;top:572.4px">H_1530</div><div class="th" style="left:103.0px;top:517.6px;background:repeating-linear-gradient(90deg,rgba(255,255,255,0.05) 0 2px,rgba(0,0,0,0.02) 2px 5px,rgba(255,255,255,0.025) 5px 9px),#b8471c"></div><div class="lbl" style="left:78.0px;top:572.4px">H_1530 Груша</div><div style="position:absolute;left:174.5px;top:0;width:13.500px;height:578px;background:linear-gradient(90deg,#e8e8e8,#f8f8f8 40%,#fdfdfd)"></div><div style="position:absolute;left:174.5px;top:1px;width:13px;height:13px;border:1px solid #c0c0c0;border-radius:2px;background:linear-gradient(#fafafa,#dedede)"><svg width="11" height="11" viewBox="0 0 11 11" style="position:absolute;left:0;top:0"><path d="M2.500,7 L5.500,4 L8.500,7" stroke="#444" stroke-width="1.700" fill="none"/></svg></div><div style="position:absolute;left:174.5px;top:121px;width:13px;height:90px;border:1px solid #c4c4c4;border-radius:2px;background:linear-gradient(90deg,#fbfbfb,#eeeeee 50%,#e0e0e0)"><div style="position:absolute;left:4px;top:41px;width:4px;height:5px;background:#bbb"></div></div><div style="position:absolute;left:174.5px;top:564px;width:13px;height:13px;border:1px solid #c0c0c0;border-radius:2px;background:linear-gradient(#fafafa,#dedede)"><svg width="11" height="11" viewBox="0 0 11 11" style="position:absolute;left:0;top:0"><path d="M2.500,4 L5.500,7 L8.500,4" stroke="#444" stroke-width="1.700" fill="none"/></svg></div></div></div>
<div id="dlg" class="abs"><div class="cap"><span style="position:absolute;left:6px;top:7px;font-size:9.2px">Отчёт</span><div style="position:absolute;left:467.0px;top:4.5px;width:14px;height:15px;border:1px solid #8a8a8a;border-radius:2px;background:linear-gradient(#6a6a6a,#3a3a3a);color:#fff;font-size:11px;text-align:center;line-height:13px">?</div><div style="position:absolute;left:484.5px;top:4.5px;width:14.5px;height:15px;border:1px solid #f2b0a0;border-radius:2px;background:linear-gradient(#e8836a,#c6391c)"><svg width="12" height="13" viewBox="0 0 12 13" style="position:absolute;left:0;top:0"><path d="M3,3.5 L9.5,10 M9.5,3.5 L3,10" stroke="#fff" stroke-width="2"/></svg></div></div><div class="body"></div><div style="position:absolute;left:7.0px;top:43.5px;width:489px;height:202px;background:#fbfbfb;border:1px solid #b9b9b9"></div><div class="tab" style="left:8.0px;top:29.5px;width:75px;font-size:9.0px">Список деталей</div><div class="tab" style="left:84.0px;top:29.5px;width:84px;font-size:9.0px">Список елементов</div><div class="tab" style="left:169.0px;top:29.5px;width:123px;font-size:9.0px">Использование материалов</div><div class="tab on" style="left:293.0px;top:26.5px;width:39px;height:18px;font-size:9.0px">Расчёт</div><div style="position:absolute;left:15.0px;top:49.0px;width:476px;height:168px;background:#fff;border:1px solid #a9a9a9;overflow:hidden"><div style="position:absolute;left:0;top:0;width:461px;height:17px;background:linear-gradient(#f4f4f4,#e3e3e3);border-bottom:1px solid #d0d0d0"></div><div style="position:absolute;left:0;top:0;font-size:9.0px;line-height:11px;white-space:nowrap"><span style="position:absolute;left:7.0px;top:3.5px;color:#222">Категория</span><span style="position:absolute;left:63.0px;top:3.5px;color:#222">Название</span><span style="position:absolute;left:140.0px;top:3.5px;color:#222">Количество</span><span style="position:absolute;left:199.0px;top:3.5px;color:#222">Единицы</span><span style="position:absolute;left:232.0px;width:60px;top:3.5px;text-align:right;color:#222">Цена</span><span style="position:absolute;left:304.0px;top:3.5px;color:#222">Стоимость</span><span style="position:absolute;left:335.0px;width:60px;top:3.5px;text-align:right;color:#222">НДС</span><span style="position:absolute;left:408.0px;top:3.5px;color:#222">Сумма Н...</span><span style="position:absolute;left:5.0px;top:18.5px;color:#222">материалы</span><span style="position:absolute;left:61.0px;top:18.5px;color:#222">ДВП облаг.</span><span style="position:absolute;left:128.0px;width:60px;top:18.5px;text-align:right;color:#222">15,83</span><span style="position:absolute;left:197.0px;top:18.5px;color:#222">м2</span><span style="position:absolute;left:232.0px;width:60px;top:18.5px;text-align:right;color:#222">207,90</span><span style="position:absolute;left:288.0px;width:60px;top:18.5px;text-align:right;color:#222">3291,95</span><span style="position:absolute;left:335.0px;width:60px;top:18.5px;text-align:right;color:#222">0</span><span style="position:absolute;left:5.0px;top:29.5px;color:#222">материалы</span><span style="position:absolute;left:61.0px;top:29.5px;color:#222">ДСП16-1</span><span style="position:absolute;left:128.0px;width:60px;top:29.5px;text-align:right;color:#222">16,22</span><span style="position:absolute;left:197.0px;top:29.5px;color:#222">м2</span><span style="position:absolute;left:232.0px;width:60px;top:29.5px;text-align:right;color:#222">1043,28</span><span style="position:absolute;left:288.0px;width:60px;top:29.5px;text-align:right;color:#222">16919,71</span><span style="position:absolute;left:335.0px;width:60px;top:29.5px;text-align:right;color:#222">0</span><span style="position:absolute;left:5.0px;top:40.6px;color:#222">материалы</span><span style="position:absolute;left:61.0px;top:40.6px;color:#222">ДСП22-1</span><span style="position:absolute;left:128.0px;width:60px;top:40.6px;text-align:right;color:#222">41,41</span><span style="position:absolute;left:197.0px;top:40.6px;color:#222">м2</span><span style="position:absolute;left:232.0px;width:60px;top:40.6px;text-align:right;color:#222">1217,16</span><span style="position:absolute;left:288.0px;width:60px;top:40.6px;text-align:right;color:#222">50401,38</span><span style="position:absolute;left:335.0px;width:60px;top:40.6px;text-align:right;color:#222">0</span><span style="position:absolute;left:5.0px;top:51.6px;color:#222">материалы</span><span style="position:absolute;left:61.0px;top:51.6px;color:#222">ДСП22-2</span><span style="position:absolute;left:128.0px;width:60px;top:51.6px;text-align:right;color:#222">0,96</span><span style="position:absolute;left:197.0px;top:51.6px;color:#222">м2</span><span style="position:absolute;left:232.0px;width:60px;top:51.6px;text-align:right;color:#222">1969,38</span><span style="position:absolute;left:288.0px;width:60px;top:51.6px;text-align:right;color:#222">1890,60</span><span style="position:absolute;left:335.0px;width:60px;top:51.6px;text-align:right;color:#222">0</span><span style="position:absolute;left:5.0px;top:62.7px;color:#222">элементы</span><span style="position:absolute;left:61.0px;top:62.7px;color:#222">Нога D60.710...</span><span style="position:absolute;left:128.0px;width:60px;top:62.7px;text-align:right;color:#222">2,00</span><span style="position:absolute;left:197.0px;top:62.7px;color:#222">шт.</span><span style="position:absolute;left:232.0px;width:60px;top:62.7px;text-align:right;color:#222">345,00</span><span style="position:absolute;left:288.0px;width:60px;top:62.7px;text-align:right;color:#222">690,00</span><span style="position:absolute;left:335.0px;width:60px;top:62.7px;text-align:right;color:#222">0</span><span style="position:absolute;left:5.0px;top:73.8px;color:#222">элементы</span><span style="position:absolute;left:61.0px;top:73.8px;color:#222">Петля 110 (107)</span><span style="position:absolute;left:128.0px;width:60px;top:73.8px;text-align:right;color:#222">48,00</span><span style="position:absolute;left:197.0px;top:73.8px;color:#222">шт.</span><span style="position:absolute;left:232.0px;width:60px;top:73.8px;text-align:right;color:#222">49,68</span><span style="position:absolute;left:288.0px;width:60px;top:73.8px;text-align:right;color:#222">2384,64</span><span style="position:absolute;left:335.0px;width:60px;top:73.8px;text-align:right;color:#222">0</span><span style="position:absolute;left:5.0px;top:84.8px;color:#222">элементы</span><span style="position:absolute;left:61.0px;top:84.8px;color:#222">Рол Направл. ...</span><span style="position:absolute;left:128.0px;width:60px;top:84.8px;text-align:right;color:#222">4,00</span><span style="position:absolute;left:197.0px;top:84.8px;color:#222">шт.</span><span style="position:absolute;left:232.0px;width:60px;top:84.8px;text-align:right;color:#222">104,88</span><span style="position:absolute;left:288.0px;width:60px;top:84.8px;text-align:right;color:#222">419,52</span><span style="position:absolute;left:335.0px;width:60px;top:84.8px;text-align:right;color:#222">0</span><span style="position:absolute;left:5.0px;top:95.9px;color:#222">элементы</span><span style="position:absolute;left:61.0px;top:95.9px;color:#222">Ручка 1кат</span><span style="position:absolute;left:128.0px;width:60px;top:95.9px;text-align:right;color:#222">28,00</span><span style="position:absolute;left:197.0px;top:95.9px;color:#222">шт.</span><span style="position:absolute;left:232.0px;width:60px;top:95.9px;text-align:right;color:#222">82,80</span><span style="position:absolute;left:288.0px;width:60px;top:95.9px;text-align:right;color:#222">2318,40</span><span style="position:absolute;left:335.0px;width:60px;top:95.9px;text-align:right;color:#222">0</span><span style="position:absolute;left:5.0px;top:106.9px;color:#222">материалы</span><span style="position:absolute;left:61.0px;top:106.9px;color:#222">Штанга D25</span><span style="position:absolute;left:128.0px;width:60px;top:106.9px;text-align:right;color:#222">0,96</span><span style="position:absolute;left:197.0px;top:106.9px;color:#222">пм</span><span style="position:absolute;left:232.0px;width:60px;top:106.9px;text-align:right;color:#222">151,80</span><span style="position:absolute;left:288.0px;width:60px;top:106.9px;text-align:right;color:#222">145,12</span><span style="position:absolute;left:335.0px;width:60px;top:106.9px;text-align:right;color:#222">0</span><span style="position:absolute;left:5.0px;top:118.0px;color:#222">элементы</span><span style="position:absolute;left:61.0px;top:118.0px;color:#222">Штангодержат...</span><span style="position:absolute;left:128.0px;width:60px;top:118.0px;text-align:right;color:#222">2,00</span><span style="position:absolute;left:197.0px;top:118.0px;color:#222">шт.</span><span style="position:absolute;left:232.0px;width:60px;top:118.0px;text-align:right;color:#222">66,24</span><span style="position:absolute;left:288.0px;width:60px;top:118.0px;text-align:right;color:#222">132,48</span><span style="position:absolute;left:335.0px;width:60px;top:118.0px;text-align:right;color:#222">0</span><span style="position:absolute;left:61.0px;top:153.5px;color:#222">материалы</span><span style="position:absolute;left:288.0px;width:60px;top:153.5px;text-align:right;color:#222">72648,77</span><span style="position:absolute;left:288.0px;width:60px;top:163.5px;text-align:right;color:#222">30454,24</span></div><div style="position:absolute;left:0;top:130px;width:461px;height:1.5px;background:#111"></div><div style="position:absolute;left:0;top:152px;width:461px;height:1.5px;background:#111"></div><div style="position:absolute;left:461px;top:0;width:14px;height:168px;background:linear-gradient(90deg,#e4e4e4,#f6f6f6 40%,#fdfdfd)"></div><div style="position:absolute;left:461px;top:0;width:13px;height:13px;border:1px solid #b8b8b8;border-radius:2px;background:linear-gradient(#fafafa,#dadada)"><svg width="11" height="11" viewBox="0 0 11 11" style="position:absolute;left:0;top:0"><path d="M2.5,7 L5.5,4 L8.5,7" stroke="#333" stroke-width="1.5" fill="none"/></svg></div><div style="position:absolute;left:461px;top:14px;width:13px;height:92px;border:1px solid #b0b0b0;border-radius:2px;background:linear-gradient(90deg,#f7f7f7,#e3e3e3 50%,#d4d4d4)"><div style="position:absolute;left:4px;top:43px;width:4px;height:5px;background:#aaa"></div></div><div style="position:absolute;left:461px;top:153px;width:13px;height:13px;border:1px solid #b8b8b8;border-radius:2px;background:linear-gradient(#fafafa,#dadada)"><svg width="11" height="11" viewBox="0 0 11 11" style="position:absolute;left:0;top:0"><path d="M2.5,4 L5.5,7 L8.5,4" stroke="#333" stroke-width="1.5" fill="none"/></svg></div></div><div class="btn" style="left:15.0px;top:225.0px;width:65px;height:16px;line-height:14px;font-size:9.0px;">Печатать</div><div class="btn" style="left:87.0px;top:225.0px;width:66px;height:16px;line-height:14px;font-size:9.0px;">Копировать</div><div class="btn" style="left:159.0px;top:225.0px;width:66px;height:16px;line-height:14px;font-size:9.0px;">Сохранить...</div><div class="btn" style="left:425.0px;top:225.0px;width:65px;height:16px;line-height:14px;font-size:9.0px;">Заметки...</div><span style="position:absolute;left:320.0px;top:228.0px;font-size:9.0px;color:#222">Скидка</span><div style="position:absolute;left:352.0px;top:225.0px;width:48px;height:16px;background:#fff;border:1px solid #9c9c9c"><span style="position:absolute;left:3px;top:2px;font-size:9.0px">0</span><svg width="9" height="14" viewBox="0 0 9 14" style="position:absolute;left:37px;top:0"><rect x="0.5" y="0.5" width="8" height="6" fill="#e4e4e4" stroke="#999"/><rect x="0.5" y="7.5" width="8" height="6" fill="#e4e4e4" stroke="#999"/><path d="M2.5,5 L4.5,2.5 L6.5,5 Z M2.5,9 L4.5,11.5 L6.5,9 Z" fill="#222"/></svg></div><span style="position:absolute;left:403.0px;top:228.0px;font-size:9.0px;color:#222">%</span><div class="btn" style="left:8.0px;top:257.5px;width:97px;height:17.0px;line-height:15.0px;font-size:9.0px;">Настройка страницы...</div><div class="btn" style="left:112.0px;top:257.5px;width:97px;height:17.0px;line-height:15.0px;font-size:9.0px;">Печатать всё...</div><div class="btn" style="left:216.0px;top:257.5px;width:97px;height:17.0px;line-height:15.0px;font-size:9.0px;">Копировать всё</div><div class="btn" style="left:320.0px;top:257.5px;width:97px;height:17.0px;line-height:15.0px;font-size:9.0px;">Сохранить всё...</div><div class="btn" style="left:435.0px;top:257.5px;width:62px;height:17.0px;line-height:15.0px;font-size:9.0px;border-color:#d9a34e;box-shadow:inset 0 0 0 1px #f7d9a0">OK</div></div>
<div class="abs" style="left:0;top:89px;width:2px;height:683px;background:#ececec"></div><div class="abs" style="left:1009px;top:89px;width:15px;height:683px;background:linear-gradient(90deg,#ececec,#f9f9f9 40%,#fefefe)"></div><div class="abs" style="left:1010px;top:89px;width:14px;height:14px;border:1px solid #c4c4c4;border-radius:2px;background:linear-gradient(#fbfbfb,#e0e0e0)"><svg width="13" height="12" viewBox="0 0 13 12" style="position:absolute;left:-0.5px;top:-0.5px"><path d="M3,8 L6.5,4.5 L10,8" stroke="#555" stroke-width="1.6" fill="none"/></svg></div><div class="abs" style="left:1010px;top:403px;width:14px;height:46px;border:1px solid #c6c6c6;border-radius:2px;background:linear-gradient(90deg,#fafafa,#ececec 50%,#dedede)"><div style="position:absolute;left:4px;top:20px;width:4px;height:5px;background:#bdbdbd"></div></div><div class="abs" style="left:1010px;top:758px;width:14px;height:13px;border:1px solid #c4c4c4;border-radius:2px;background:linear-gradient(#fbfbfb,#e0e0e0)"><svg width="13" height="12" viewBox="0 0 13 12" style="position:absolute;left:-0.5px;top:-0.5px"><path d="M3,4.5 L6.5,8 L10,4.5" stroke="#555" stroke-width="1.6" fill="none"/></svg></div><div class="abs" style="left:0;top:771.5px;width:1009px;height:15px;background:linear-gradient(#e9e9e9,#f8f8f8 40%,#fdfdfd)"></div><div class="abs" style="left:1009px;top:771.5px;width:15px;height:15px;background:#f0f0f0"></div><div class="abs" style="left:0px;top:773px;width:13px;height:12px;border:1px solid #c4c4c4;border-radius:2px;background:linear-gradient(#fbfbfb,#e0e0e0)"><svg width="13" height="12" viewBox="0 0 13 12" style="position:absolute;left:-0.5px;top:-0.5px"><path d="M8,3 L4.5,6.5 L8,10" stroke="#555" stroke-width="1.6" fill="none"/></svg></div><div class="abs" style="left:434px;top:772.5px;width:99px;height:13px;border:1px solid #c2c2c2;border-radius:2px;background:linear-gradient(#fafafa,#ececec 50%,#dedede)"><div style="position:absolute;left:46px;top:4px;width:5px;height:4px;background:#bdbdbd"></div></div><div class="abs" style="left:996px;top:773px;width:13px;height:12px;border:1px solid #c4c4c4;border-radius:2px;background:linear-gradient(#fbfbfb,#e0e0e0)"><svg width="13" height="12" viewBox="0 0 13 12" style="position:absolute;left:-0.5px;top:-0.5px"><path d="M5,3 L8.5,6.5 L5,10" stroke="#555" stroke-width="1.6" fill="none"/></svg></div><div class="abs" style="left:0;top:786.5px;width:1024px;height:30px;background:#f0f0f0"></div><div class="abs" style="left:0;top:816px;width:1024px;height:3px;background:#1f1f1f"></div><svg class="abs" style="left:0;top:786px" width="460" height="18" viewBox="0 0 460 18"><path d="M7,0.5 L11,11.5 Q11.6,13.3 13.5,13.3 H65.5 Q67.0,13.3 67.5,11.5 L71.0,0.5" fill="#fdfdfd" stroke="#3a3a3a" stroke-width="1"/><path d="M15,14.6 H64.5" stroke="#555" stroke-width="1"/><text x="38.0" y="10.6" font-size="9.1" text-anchor="middle" fill="#333" font-family="Liberation Sans, sans-serif">Перспектива</text><path d="M71.0,0.5 L68.0,10.5 Q68.0,13.3 71.5,13.3 H132.5 Q134.0,13.3 134.5,11.5 L138.0,0.5" fill="#f3f3f3" stroke="none"/><path d="M67.9,10.5 Q68.0,13.3 71.5,13.3 H132.5 Q134.0,13.3 134.5,11.5 L138.0,0.5" fill="none" stroke="#3a3a3a" stroke-width="1"/><text x="103.2" y="10.6" font-size="9.1" text-anchor="middle" fill="#333" font-family="Liberation Sans, sans-serif">Аксонометрия</text><path d="M138.0,0.5 L135.0,10.5 Q135.0,13.3 138.5,13.3 H160 Q161.5,13.3 162,11.5 L165.5,0.5" fill="#f3f3f3" stroke="none"/><path d="M134.9,10.5 Q135.0,13.3 138.5,13.3 H160 Q161.5,13.3 162,11.5 L165.5,0.5" fill="none" stroke="#3a3a3a" stroke-width="1"/><text x="150.4" y="10.6" font-size="9.1" text-anchor="middle" fill="#333" font-family="Liberation Sans, sans-serif">План</text><path d="M165.5,0.5 L162.5,10.5 Q162.5,13.3 166,13.3 H232 Q233.5,13.3 234,11.5 L237.5,0.5" fill="#f3f3f3" stroke="none"/><path d="M162.4,10.5 Q162.5,13.3 166,13.3 H232 Q233.5,13.3 234,11.5 L237.5,0.5" fill="none" stroke="#3a3a3a" stroke-width="1"/><text x="200.2" y="10.6" font-size="9.1" text-anchor="middle" fill="#333" font-family="Liberation Sans, sans-serif">Северная стена</text><path d="M237.5,0.5 L234.5,10.5 Q234.5,13.3 238,13.3 H304 Q305.5,13.3 306,11.5 L309.5,0.5" fill="#f3f3f3" stroke="none"/><path d="M234.4,10.5 Q234.5,13.3 238,13.3 H304 Q305.5,13.3 306,11.5 L309.5,0.5" fill="none" stroke="#3a3a3a" stroke-width="1"/><text x="272.2" y="10.6" font-size="9.1" text-anchor="middle" fill="#333" font-family="Liberation Sans, sans-serif">Западная стена</text><path d="M309.5,0.5 L306.5,10.5 Q306.5,13.3 310,13.3 H364.5 Q366.0,13.3 366.5,11.5 L370.0,0.5" fill="#f3f3f3" stroke="none"/><path d="M306.4,10.5 Q306.5,13.3 310,13.3 H364.5 Q366.0,13.3 366.5,11.5 L370.0,0.5" fill="none" stroke="#3a3a3a" stroke-width="1"/><text x="338.4" y="10.6" font-size="9.1" text-anchor="middle" fill="#333" font-family="Liberation Sans, sans-serif">Южная стена</text><path d="M370.0,0.5 L367.0,10.5 Q367.0,13.3 370.5,13.3 H440.5 Q442.0,13.3 442.5,11.5 L446.0,0.5" fill="#f3f3f3" stroke="none"/><path d="M366.9,10.5 Q367.0,13.3 370.5,13.3 H440.5 Q442.0,13.3 442.5,11.5 L446.0,0.5" fill="none" stroke="#3a3a3a" stroke-width="1"/><text x="406.7" y="10.6" font-size="9.1" text-anchor="middle" fill="#333" font-family="Liberation Sans, sans-serif">Восточная стена</text></svg>
</body></html>
